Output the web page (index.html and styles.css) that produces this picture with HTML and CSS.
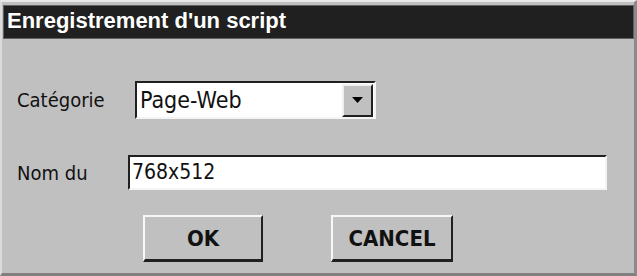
FILE: index.html
```html
<!DOCTYPE html>
<html>
<head>
<meta charset="utf-8">
<link rel="stylesheet" href="styles.css">
</head>
<body>
<div class="window">
  <div class="titlebar">Enregistrement d'un script</div>
  <div class="content">
    <div class="row row-cat">
      <span class="label label-cat">Catégorie</span>
      <div class="select">
        <span class="select-text">Page-Web</span>
        <span class="drop"><svg width="11" height="6" viewBox="0 0 11 6"><path d="M0 0H11L5.5 6Z" fill="#000"/></svg></span>
      </div>
    </div>
    <div class="row row-name">
      <span class="label label-name">Nom du</span>
      <div class="input">768x512</div>
    </div>
    <div class="buttons">
      <div class="btn btn-ok">OK</div>
      <div class="btn btn-cancel">CANCEL</div>
    </div>
  </div>
</div>
</body>
</html>
```
FILE: styles.css
```css
html, body {
  margin: 0;
  padding: 0;
  background: #c0c0c0;
}
.window {
  width: 637px;
  height: 276px;
  box-sizing: border-box;
  background: #c0c0c0;
  border-top: 2px solid #e8e8e8;
  border-left: 2px solid #dcdcdc;
  border-right: 3px solid #8a8a8a;
  border-bottom: 3px solid #808080;
  font-family: "DejaVu Sans Condensed", "DejaVu Sans", sans-serif;
  display: flex;
  flex-direction: column;
}
.titlebar {
  margin: 3px 0 0 1px;
  height: 34px;
  box-sizing: border-box;
  background: #202020;
  border: 1px solid #606060;
  color: #fff;
  font-family: "Liberation Sans", Arial, sans-serif;
  font-weight: bold;
  font-size: 22px;
  line-height: 30px;
  padding-left: 3px;
}
.content {
  padding-left: 15px;
  display: flex;
  flex-direction: column;
}
.row {
  display: flex;
  align-items: center;
}
.row-cat {
  margin-top: 42px;
  height: 38px;
}
.row-name {
  margin-top: 36px;
  height: 35px;
}
.label {
  font-size: 20px;
  color: #111;
}
.label-cat { width: 118px; }
.label-name { width: 111px; }
.select {
  width: 241px;
  height: 38px;
  box-sizing: border-box;
  background: #fff;
  border-top: 2px solid #202020;
  border-left: 2px solid #202020;
  border-right: 2px solid #f4f4f4;
  border-bottom: 2px solid #f4f4f4;
  display: flex;
  align-items: center;
  padding-left: 3px;
}
.select-text {
  flex: 1;
  font-size: 23px;
  color: #111;
}
.drop {
  width: 31px;
  height: 33px;
  box-sizing: border-box;
  margin-right: 1px;
  background: #c0c0c0;
  border-top: 2px solid #f0f0f0;
  border-left: 2px solid #f0f0f0;
  border-right: 2px solid #202020;
  border-bottom: 2px solid #202020;
  display: flex;
  align-items: center;
  justify-content: center;
}
.input {
  width: 479px;
  height: 35px;
  box-sizing: border-box;
  background: #fff;
  border-top: 2px solid #202020;
  border-left: 2px solid #202020;
  border-right: 2px solid #f4f4f4;
  border-bottom: 2px solid #f4f4f4;
  font-size: 21px;
  line-height: 31px;
  padding-left: 2px;
  color: #111;
}
.buttons {
  margin-top: 25px;
  display: flex;
  padding-left: 126px;
  gap: 68px;
}
.btn {
  width: 120px;
  height: 47px;
  box-sizing: border-box;
  background: #c0c0c0;
  border-top: 2px solid #f8f8f8;
  border-left: 2px solid #f8f8f8;
  border-right: 2px solid #202020;
  border-bottom: 3px solid #202020;
  display: flex;
  align-items: center;
  justify-content: center;
  font-family: "DejaVu Sans Condensed", "DejaVu Sans", sans-serif;
  font-weight: bold;
  font-size: 22px;
  color: #111;
}
.btn-cancel { width: 122px; }
```
